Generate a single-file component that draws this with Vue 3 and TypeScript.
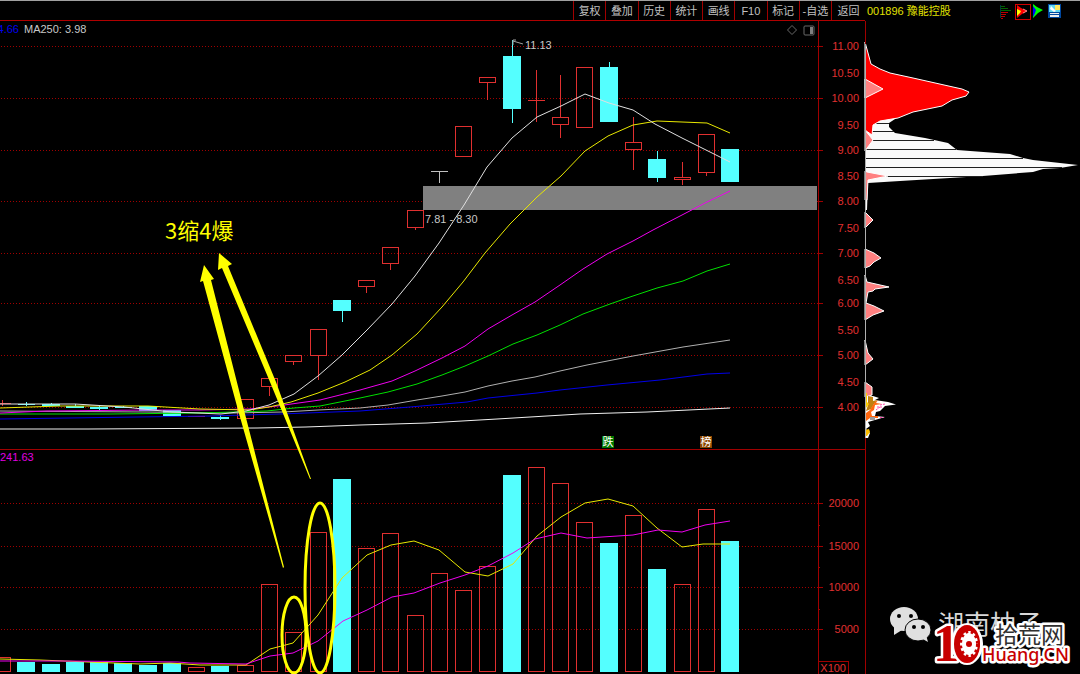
<script setup lang="ts">
interface Bar {
  up: boolean
  top: number
  bottom: number
  high: number
  low: number
  vol: number
}

const tools: string[] = ['复权', '叠加', '历史', '统计', '画线', 'F10', '标记', '-自选', '返回']

const bar = (up: boolean, top: number, bottom: number, high: number, low: number, vol: number): Bar => ({
  up, top, bottom, high, low, vol,
})

const bars: Bar[] = [
  bar(true, 403, 404, 400, 406, 657),
  bar(false, 404, 405, 402, 406, 662),
  bar(false, 404, 406, 403, 406, 664),
  bar(false, 406, 408, 404, 408, 662),
  bar(false, 407, 409, 406, 411, 662),
  bar(false, 407, 408, 406, 408, 663),
  bar(false, 406, 411, 406, 411, 665),
  bar(false, 410, 416, 410, 416, 663),
  bar(true, 416, 417, 416, 417, 667),
  bar(false, 417, 419, 415, 420, 666),
  bar(true, 399, 418, 399, 418, 665),
  bar(true, 378, 386, 378, 396, 584),
  bar(true, 355, 361, 355, 365, 632),
  bar(true, 329, 355, 329, 380, 532),
  bar(false, 300, 311, 300, 322, 479),
  bar(true, 280, 286, 280, 293, 548),
  bar(true, 247, 263, 247, 270, 533),
  bar(true, 210, 227, 210, 230, 615),
  bar(true, 171, 171, 171, 183, 573),
  bar(true, 126, 156, 126, 156, 590),
  bar(true, 77, 82, 77, 100, 566),
  bar(false, 56, 109, 40, 123, 475),
  bar(true, 100, 100, 70, 122, 467),
  bar(true, 117, 124, 75, 138, 483),
  bar(true, 67, 127, 67, 127, 522),
  bar(false, 67, 122, 62, 122, 543),
  bar(true, 142, 149, 117, 170, 515),
  bar(false, 159, 178, 151, 182, 569),
  bar(true, 177, 179, 162, 185, 584),
  bar(true, 134, 172, 134, 176, 509),
  bar(false, 149, 182, 149, 182, 541),
]

const x = (i: number): number => Math.round(i * 24.27 + 2)
const tone = (b: Bar, i: number): string => (i === 18 ? 'flat' : b.up ? 'up' : 'down')

const priceTicks = [
  { label: '11.00', y: 46 }, { label: '10.50', y: 73 }, { label: '10.00', y: 98 },
  { label: '9.50', y: 125 }, { label: '9.00', y: 150 }, { label: '8.50', y: 176 },
  { label: '8.00', y: 201 }, { label: '7.50', y: 228 }, { label: '7.00', y: 253 },
  { label: '6.50', y: 280 }, { label: '6.00', y: 303 }, { label: '5.50', y: 330 },
  { label: '5.00', y: 355 }, { label: '4.50', y: 382 }, { label: '4.00', y: 407 },
]
const volTicks = [
  { label: '20000', y: 503 }, { label: '15000', y: 546 },
  { label: '10000', y: 587 }, { label: '5000', y: 629 },
]
const minorTicks = [525, 567, 609]
const gridRows: number[] = [
  ...priceTicks.filter((_, i) => i % 2 === 0).map((t) => t.y),
  ...volTicks.map((t) => t.y),
]

const averages = [
  { name: 'ma250', pts: '0,429 88,429 257,428 306,427 360,425 427,423 497,419 580,414 647,412 730,408' },
  { name: 'ma120', pts: '0,419 137,417 210,416 280,414 360,411 410,407 467,402 488,398 537,393 560,390 607,385 660,380 707,374 730,373' },
  { name: 'ma60', pts: '0,411 148,412 233,413 283,412 318,410 360,408 388,405 417,400 442,396 465,392 488,386 512,381 535,377 560,371 587,365 633,356 683,347 730,340' },
  { name: 'ma30', pts: '0,414 110,414 200,413 267,411 294,408 320,406 360,398 388,392 417,384 442,375 465,366 488,356 513,344 537,335 560,325 583,314 610,304 630,297 657,288 683,281 707,271 730,264' },
  { name: 'ma20', pts: '0,413 47,411 148,410 200,410 250,409 277,406 320,400 360,390 392,381 415,371 442,358 465,346 488,329 512,315 535,302 560,285 583,269 607,254 633,241 653,230 682,215 707,202 730,191' },
  { name: 'ma10', pts: '0,408 60,406 148,406 200,409 250,410 269,407 291,402 318,393 345,382 370,370 392,355 417,334 442,307 463,282 485,253 510,224 537,197 561,176 585,151 608,136 633,125 657,121 707,123 730,133' },
  { name: 'ma5', pts: '0,404 75,404 124,407 172,412 221,414 246,411 269,405 294,394 318,376 342,355 367,330 392,304 415,276 439,243 464,205 487,167 512,138 537,117 561,106 585,94 609,103 633,110 655,124 682,138 706,150 730,162' },
  { name: 'ma10', pts: '0,659 40,660 88,662 140,664 170,663 200,665 246,665 270,649 293,643 318,615 342,578 367,555 391,545 414,541 439,550 465,572 488,576 513,564 537,536 561,517 585,503 608,499 633,506 657,528 682,547 703,544 730,544' },
  { name: 'ma20', pts: '0,661 63,661 178,662 190,663 246,664 270,656 293,653 318,641 343,621 367,610 392,597 414,593 440,583 465,575 488,566 513,553 535,539 561,533 587,538 633,535 658,530 682,532 705,525 730,521' },
]

const pinkPeaks: string[] = [
  '865,79 883,89 865,98',
  '865,130 873,140 865,151',
  '865,171 867,172 888,176 868,180 867,200 865,200',
  '865,212 873,220 865,228',
  '865,249 874,253 881,258 874,262 870,266 865,268',
  '865,275 867,282 889,287 875,289 873,291 868,292 866,303 874,306 884,311 873,315 865,320',
  '865,340 868,353 873,359 865,365',
  '865,382 872,387 872,395 865,397',
]
const seams = [
  { y: 123, to: 889 }, { y: 131, to: 894 }, { y: 140, to: 934 }, { y: 149, to: 956 },
  { y: 158, to: 1023 }, { y: 167, to: 1062 }, { y: 176, to: 983 },
]
</script>

<template>
  <main class="terminal">
    <section class="left">
      <nav class="toolbar">
        <button v-for="t in tools" :key="t" type="button">{{ t }}</button>
      </nav>
      <svg class="chart" viewBox="0 21 865 653" role="img" aria-label="K线图">
        <g class="grid">
          <line v-for="y in gridRows" :key="y" x1="1" x2="818" :y1="y + 0.5" :y2="y + 0.5" />
        </g>
        <rect class="gap" x="423" y="186" width="394" height="24" />

        <g class="crisp">
          <g v-for="(b, i) in bars" :key="i" :class="tone(b, i)">
            <line :x1="x(i) + 0.5" :x2="x(i) + 0.5" :y1="b.high" :y2="b.top" />
            <line :x1="x(i) + 0.5" :x2="x(i) + 0.5" :y1="b.bottom" :y2="b.low" />
            <line v-if="b.bottom - b.top < 2" :x1="x(i) - 8" :x2="x(i) + 9" :y1="b.top + 0.5" :y2="b.top + 0.5" />
            <rect v-else-if="b.up" :x="x(i) - 8 + 0.5" :y="b.top + 0.5" width="16" :height="b.bottom - b.top" />
            <rect v-else :x="x(i) - 9" :y="b.top" width="18" :height="b.bottom - b.top" />
          </g>
          <g v-for="(b, i) in bars" :key="'v' + i" :class="b.up ? 'up' : 'down'">
            <rect v-if="b.up" :x="x(i) - 8 + 0.5" :y="b.vol + 0.5" width="16" :height="671 - b.vol" />
            <rect v-else :x="x(i) - 9" :y="b.vol" width="18" :height="672 - b.vol" />
          </g>
        </g>

        <polyline v-for="(m, i) in averages" :key="'m' + i" class="avg" :class="m.name" :points="m.pts" />

        <g class="frame">
          <path d="M818.5 21V674M0 449.5H865M818 661.5H848.5V674" />
          <line v-for="y in gridRows" :key="y" x1="818" x2="823" :y1="y + 0.5" :y2="y + 0.5" />
          <line v-for="y in minorTicks" :key="y" x1="818" x2="820" :y1="y + 0.5" :y2="y + 0.5" />
        </g>
        <g class="axis">
          <text v-for="t in priceTicks" :key="t.label" x="859" :y="t.y + 4">{{ t.label }}</text>
          <text v-for="t in volTicks" :key="t.label" x="859" :y="t.y + 4">{{ t.label }}</text>
          <text x="846" y="672">X100</text>
        </g>

        <text class="t blue" x="19" y="33" text-anchor="end">4.66</text>
        <text class="t pale" x="24" y="33">MA250: 3.98</text>
        <text class="t violet" x="0" y="461">241.63</text>
        <text class="t pale" x="525" y="49">11.13</text>
        <text class="t pale" x="425" y="223">7.81 - 8.30</text>
        <path class="mark" d="M523 44L513 41M513 45V40H516" />
        <path class="mark dim" d="M792 25.500L796.500 30L792 34.500L787.500 30Z" />
        <rect class="mark dim" x="804" y="26" width="10" height="9" rx="1" />
        <rect class="fill-dim" x="810" y="27" width="3" height="7" />

        <rect class="tag-green" x="602" y="436" width="12" height="12" />
        <text class="tag" x="608" y="446">跌</text>
        <rect class="tag-brown" x="700" y="436" width="12" height="12" />
        <text class="tag" x="706" y="446">榜</text>

        <g class="note">
          <path d="M204 265L214 279L211 280L244 410L284 567L283 568L238 410L203 281L200 282Z" />
          <path d="M219 253L232 264L228 266L276 382L311 479L310 479L270 382L222 268L218 270Z" />
          <ellipse cx="294" cy="635" rx="12" ry="38" />
          <ellipse cx="320" cy="588" rx="15" ry="85" />
          <text x="165" y="239">3缩4爆</text>
        </g>
      </svg>
    </section>

    <aside class="right">
      <header class="stock">
        <h1>001896 豫能控股</h1>
        <div class="modes">
          <button type="button" aria-label="筹码分布">
            <svg viewBox="0 0 16 16"><path d="M1.500 1V14" stroke="#003838" /><path d="M2 2.500H6M2 4.500H9M2 6.500H12" stroke="#006400" /><path d="M2 8.500H9M2 10.500H7M2 12.500H6M2 14.500H4" stroke="#c00000" /></svg>
          </button>
          <button type="button" aria-label="火焰山">
            <svg viewBox="0 0 16 16"><rect x=".5" y=".5" width="15" height="15" fill="none" stroke="#d00000" /><path d="M2 1L6 4L12 7L7 10L2 14Z" fill="#f00" /><path d="M2 5L6 7L5 9L2 12Z" fill="#ff0" /><path d="M8 5L12 7L8 9" fill="none" stroke="#f88" /></svg>
          </button>
          <button type="button" aria-label="活跃度">
            <svg viewBox="0 0 16 16"><path d="M2 0L6 3L12 6L7 9L2 14Z" fill="#0f0" /><path d="M2 2L5 6L4 9L2 13Z" fill="#00f" /></svg>
          </button>
          <button type="button" aria-label="设置">
            <svg viewBox="0 0 16 16"><rect x="1" y="0" width="13" height="14" fill="#0048a0" /><rect x="2" y="1" width="11" height="7" fill="#60d8f0" /><rect x="8" y="1" width="5" height="5" fill="#ffe860" /><path d="M4 2L9 7L7 8L3 5Z" fill="#fff" /><rect x="3" y="9" width="9" height="4" fill="#eee" /><path d="M3 10.500H12" stroke="#0048a0" /></svg>
          </button>
        </div>
      </header>
      <svg class="chips" viewBox="865 21 215 653" role="img" aria-label="筹码分布图">
        <polygon class="white" points="865,120 880,120 898,117 889,123 889,127 895,133 925,138 948,143 957,150 1010,154 1023,158 1033,160 1078,165 1060,168 1043,169 1033,172 983,176 900,181 868,183 867,210 865,210" />
        <path v-for="s in seams" :key="s.y" class="seam" :d="`M866 ${s.y + 0.5}H${s.to}`" />
        <polygon class="red" points="865,42 868,53 871,64 880,69 890,73 913,78 953,87 962,89 969,92 966,96 952,100 942,106 913,112 898,118 880,121 873,125 872,135 865,130" />
        <polygon v-for="p in pinkPeaks" :key="p" class="pink" :points="p" />
        <g>
          <path fill="#fff" d="M866 396H873L879 398L875 400L888 402L896 404.500L885 406L880 411L876 412L875 416L885 417L875 420L868 422L870 426L866 429L870 433L868 438H865Z" />
          <path fill="#c08010" d="M868 396L873 397L873 401L877 400L874 404L871 409L866 411L868 405Z" />
          <path fill="#ffd000" d="M865 393H867V402L869 404L866 408Z" />
          <path fill="#ff6810" d="M878 400L876 403L882 404L875 405L874 410L871 412L872 416H878V418H870L866 421V413L870 410L873 405L875 402Z" />
          <path fill="none" stroke="#f4a" stroke-dasharray="2 1" d="M877 407H883M880 405L885 404M876 410L880 407M880 417.500H884" />
          <path fill="#999" d="M870 417H875V420H870Z" />
          <path fill="#ffc000" d="M865 430L869 429L870 432L867 436H865Z" />
        </g>
        <path class="edge" d="M865 21V44M865 438V674" />
        <path class="spine" d="M865.500 44V438" />

        <g class="wechat">
          <ellipse cx="904" cy="619" rx="14" ry="12" />
          <path d="M894 626L894 635L902 630Z" />
          <ellipse class="cut" cx="918" cy="630" rx="13" ry="11" />
          <path d="M921 638L928 642L926 635Z" />
          <circle class="eye" cx="899" cy="616" r="2" />
          <circle class="eye" cx="911" cy="616" r="2" />
          <circle class="eye" cx="914" cy="627" r="2" />
          <circle class="eye" cx="923" cy="627" r="2" />
        </g>
        <text class="author" x="938" y="634">湖南柚子</text>
        <g class="logo">
          <text class="one" x="933" y="661">1</text>
          <ellipse cx="967" cy="644" rx="16" ry="21" fill="#fff" />
          <ellipse cx="967" cy="644" rx="13" ry="19" fill="#c80000" />
          <ellipse cx="969" cy="644" rx="9" ry="13" fill="#fff" />
          <ellipse class="teeth" cx="969" cy="644" rx="9" ry="13" />
          <circle cx="969" cy="644" r="3" fill="#c80000" />
          <text class="site" x="995" y="643">拾荒网</text>
          <text class="domain" x="982" y="661">Huang.CN</text>
        </g>
      </svg>
    </aside>
  </main>
</template>

<style>
body { background: #000; }
</style>

<style scoped>
.terminal {
  display: grid;
  grid-template-columns: minmax(0, 865fr) minmax(0, 215fr);
  background: #000;
  border-top: 1px solid #a0a0a0;
  min-height: 100vh;
  box-sizing: border-box;
  overflow: hidden;
  font: 11px/19px "Liberation Sans", "Noto Sans CJK SC", sans-serif;
}
.left, .right { display: flex; flex-direction: column; min-width: 0; }
.toolbar {
  display: grid;
  flex: none;
  grid-template-columns: repeat(8, 1fr) 34px;
  width: 292px;
  height: 19px;
  margin-left: auto;
}
button {
  background: none;
  border: 0;
  padding: 0;
  margin: 0;
  font: inherit;
  color: #c0c0c0;
}
.toolbar button { border-left: 1px solid #a00000; white-space: nowrap; padding-top: 1px; }
.chart { border-top: 1px solid #b00000; }
.chart, .chips { display: block; width: 100%; height: auto; overflow: visible; }
.stock {
  display: flex;
  align-items: center;
  justify-content: space-between;
  height: 20px;
  padding: 0 17px 0 2px;
}
h1 { margin: 0; font-size: 11px; font-weight: 400; color: #e0e000; }
.modes { display: flex; padding-top: 2px; }
.modes svg { display: block; width: 16px; height: 16px; }
.grid line { stroke: #a00000; stroke-dasharray: 1 2; shape-rendering: crispEdges; }
.gap { fill: #808080; }
.crisp, .frame { shape-rendering: crispEdges; }
.up line, .up rect { stroke: #e03030; fill: none; }
.down line { stroke: #54ffff; }
.down rect { fill: #54ffff; }
.flat line { stroke: #c0c0c0; }
.avg { fill: none; stroke-width: 1; }
.ma5 { stroke: #e0e0e0; }
.ma10 { stroke: #e8e800; }
.ma20 { stroke: #f000f0; }
.ma30 { stroke: #00e000; }
.ma60 { stroke: #b0b0b0; }
.ma120 { stroke: #0000e8; }
.ma250 { stroke: #f0f0f0; }
.frame path, .frame line { fill: none; stroke: #a00000; }
.axis text { fill: #e03030; text-anchor: end; }
.t.pale { fill: #c8c8c8; }
.t.blue { fill: #0000f0; }
.t.violet { fill: #e000e0; }
.mark { fill: none; stroke: #a0a0a0; }
.mark.dim { stroke: #686868; }
.fill-dim { fill: #808080; }
.tag-green { fill: #007800; }
.tag-brown { fill: #8c4600; }
.tag { fill: #fff; text-anchor: middle; }
.note path { fill: #ff0; }
.note ellipse { fill: none; stroke: #ff0; stroke-width: 3; }
.note text { fill: #ff0; font-family: "Noto Sans CJK SC", sans-serif; font-size: 22px; }
.white { fill: #fafafa; }
.seam { stroke: #202020; shape-rendering: crispEdges; }
.red { fill: #f00; stroke: #fff; }
.pink { fill: #ff8080; stroke: #fff; }
.edge { stroke: #a00000; shape-rendering: crispEdges; }
.spine { stroke: #b0b0b0; stroke-width: 1; }
.wechat { fill: #e0e0e0; }
.wechat .cut { stroke: #000; }
.wechat .eye { fill: #000; }
.author { fill: #d8d8d8; font-size: 26px; }
.logo text { stroke: #fff; paint-order: stroke; stroke-linejoin: round; }
.logo .one { fill: #c80000; font: 700 53px "Liberation Serif", serif; stroke-width: 5px; }
.teeth { fill: none; stroke: #c80000; stroke-width: 4; stroke-dasharray: 3 3; }
.logo .site { fill: #303030; font-size: 23px; stroke-width: 5px; }
.logo .domain { fill: #c80000; font: 500 18px "Noto Sans", "Open Sans", sans-serif; stroke-width: 5px; }
</style>
